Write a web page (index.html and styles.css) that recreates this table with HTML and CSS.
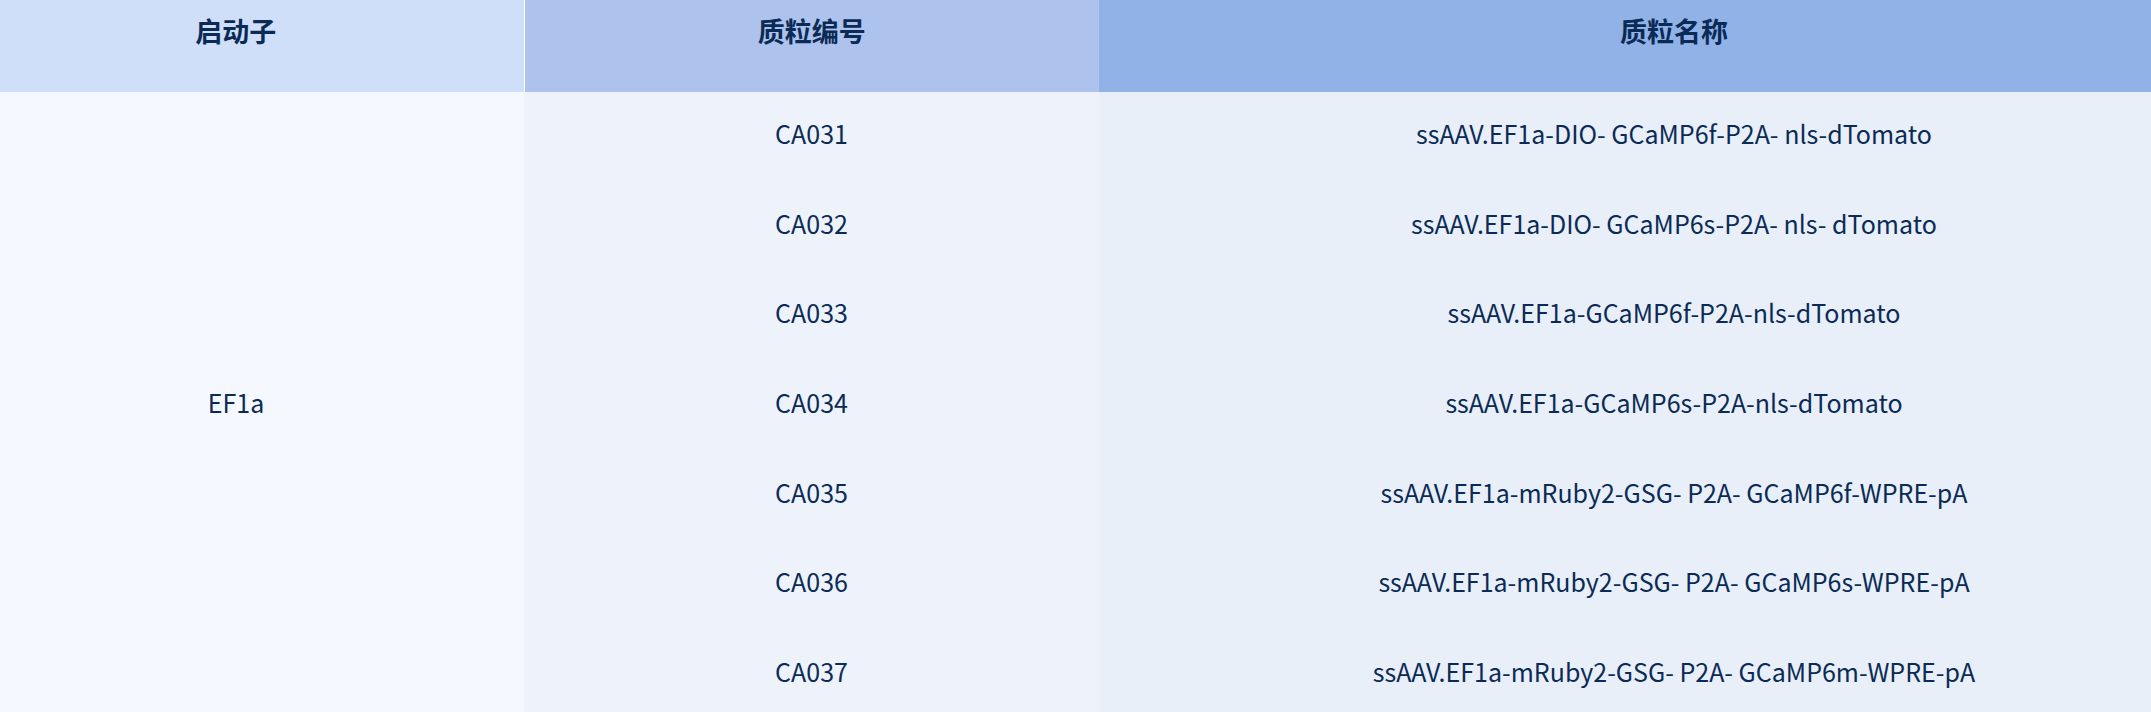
FILE: index.html
```html
<!DOCTYPE html>
<html lang="zh-CN">
<head>
<meta charset="utf-8">
<title>质粒列表</title>
<link rel="stylesheet" href="styles.css">
</head>
<body>
<table class="plasmids">
  <colgroup>
    <col class="c-promoter">
    <col class="c-id">
    <col class="c-name">
  </colgroup>
  <thead>
    <tr>
      <th class="h-promoter">启动子</th>
      <th class="h-id">质粒编号</th>
      <th class="h-name">质粒名称</th>
    </tr>
  </thead>
  <tbody>
    <tr>
      <td class="promoter" rowspan="7">EF1a</td>
      <td class="id">CA031</td>
      <td class="name">ssAAV.EF1a-DIO- GCaMP6f-P2A- nls-dTomato</td>
    </tr>
    <tr>
      <td class="id">CA032</td>
      <td class="name">ssAAV.EF1a-DIO- GCaMP6s-P2A- nls- dTomato</td>
    </tr>
    <tr>
      <td class="id">CA033</td>
      <td class="name">ssAAV.EF1a-GCaMP6f-P2A-nls-dTomato</td>
    </tr>
    <tr>
      <td class="id">CA034</td>
      <td class="name">ssAAV.EF1a-GCaMP6s-P2A-nls-dTomato</td>
    </tr>
    <tr>
      <td class="id">CA035</td>
      <td class="name">ssAAV.EF1a-mRuby2-GSG- P2A- GCaMP6f-WPRE-pA</td>
    </tr>
    <tr>
      <td class="id">CA036</td>
      <td class="name">ssAAV.EF1a-mRuby2-GSG- P2A- GCaMP6s-WPRE-pA</td>
    </tr>
    <tr>
      <td class="id">CA037</td>
      <td class="name">ssAAV.EF1a-mRuby2-GSG- P2A- GCaMP6m-WPRE-pA</td>
    </tr>
  </tbody>
</table>
</body>
</html>
```

FILE: styles.css
```css
html, body {
  margin: 0;
  padding: 0;
  background: #f5f8fe;
}

body {
  font-family: "Noto Sans CJK SC", "Noto Sans", sans-serif;
  color: #0b2b56;
  overflow: hidden;
}

.plasmids {
  width: 2151px;
  table-layout: fixed;
  border-collapse: collapse;
  border-spacing: 0;
}

.c-promoter { width: 524px; }
.c-id { width: 575px; }
.c-name { width: 1052px; }

.plasmids th {
  height: 92px;
  padding-top: 11px;
  padding-bottom: 0;
  box-sizing: border-box;
  vertical-align: top;
  font-size: 27px;
  font-weight: 700;
  line-height: 40px;
  text-align: center;
  color: #0b2b56;
}

.plasmids td {
  height: 89.6px;
  padding-top: 0;
  padding-bottom: 7px;
  box-sizing: border-box;
  font-size: 25px;
  line-height: 32px;
  text-align: center;
  vertical-align: middle;
}

.h-promoter,
.promoter {
  padding-left: 0;
  padding-right: 52px;
}

.h-id,
.id {
  padding-left: 0;
  padding-right: 0;
}

.h-name,
.name {
  padding-left: 98px;
  padding-right: 0;
}

.h-promoter {
  background: #d0dff9;
  border-right: 1px solid #ffffff;
}

.h-id { background: #adc2ec; }
.h-name { background: #90b2e7; }

.promoter { background: #f5f8fe; }
.id { background: #edf2fb; }
.name { background: #e8eff9; }
```
